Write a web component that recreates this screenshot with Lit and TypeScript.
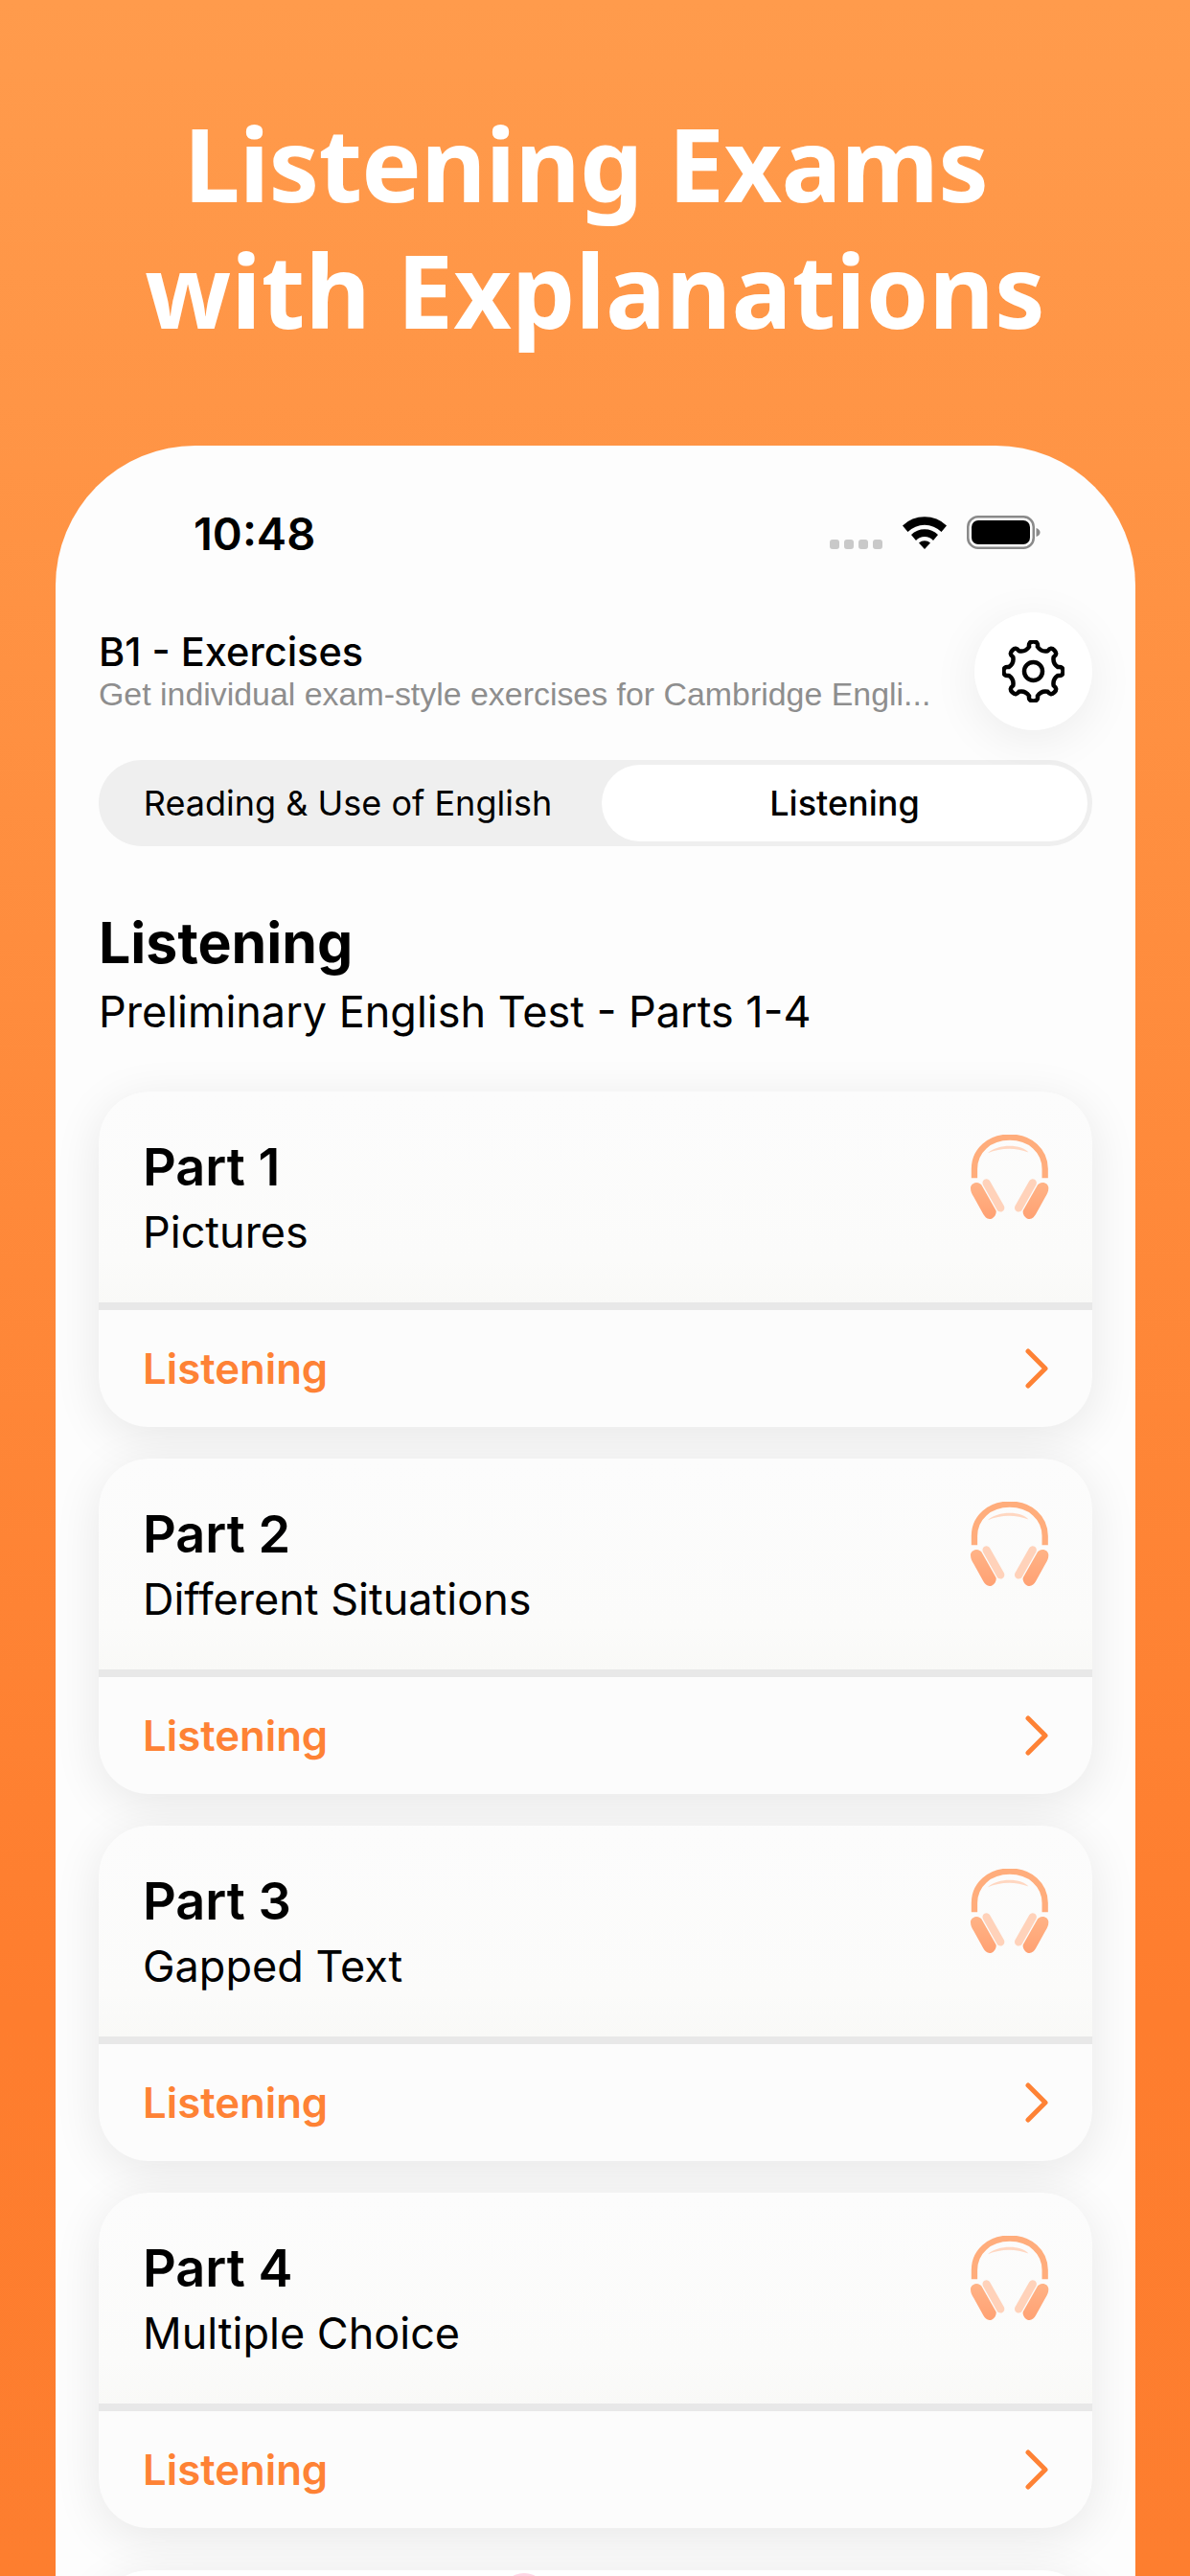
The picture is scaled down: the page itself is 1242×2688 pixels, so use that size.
import { LitElement, html, css, svg } from "lit";
import { customElement } from "lit/decorators.js";

const parts = [
  ["Part 1", "Pictures"],
  ["Part 2", "Different Situations"],
  ["Part 3", "Gapped Text"],
  ["Part 4", "Multiple Choice"],
];

function gearPath(): string {
  const cx = 32.5;
  const cy = 32.5;
  const pt = (r: number, a: number) =>
    `${(cx + r * Math.cos(a)).toFixed(2)} ${(cy + r * Math.sin(a)).toFixed(2)}`;
  let d = "";
  for (let i = 0; i < 8; i++) {
    const a = -Math.PI / 2 + (i * Math.PI) / 4;
    const next = a + Math.PI / 4;
    const w = 0.17;
    d += i === 0 ? `M${pt(26, a - w)}` : `L${pt(26, a - w)}`;
    d += `Q${pt(31.5, a - w)} ${pt(31, a)}`;
    d += `Q${pt(31.5, a + w)} ${pt(26, a + w)}`;
    d += `Q${pt(21.5, a + Math.PI / 8)} ${pt(26, next - w)}`;
  }
  return d + "Z";
}

const cup =
  "M96 240C96 226 112 218 126 226C135 231 140 240 145 248L174 300C180 312 176 330 162 336C150 340 142 332 136 322L106 268C100 258 96 250 96 240Z";

const phones = svg`
  <defs>
    <linearGradient id="cup" x1="0" y1="0" x2="0" y2="1">
      <stop offset="0" stop-color="#ffb386" />
      <stop offset="1" stop-color="#ffa173" />
    </linearGradient>
  </defs>
  <path d="M108 208V180C108 122 155 80 219 80S330 122 330 180V208" fill="none" stroke="#ffad7c" stroke-width="19" />
  <path d="M150 130C180 100 258 100 278 128C240 112 190 112 150 130Z" fill="#ffd7c1" />
  <path d=${cup} fill="url(#cup)" />
  <path d=${cup} fill="url(#cup)" transform="matrix(-1 0 0 1 437 0)" />
  <path d="M146 224L190 302" fill="none" stroke="#fbfbfa" stroke-width="33" stroke-linecap="round" />
  <path d="M291 224L247 302" fill="none" stroke="#fbfbfa" stroke-width="33" stroke-linecap="round" />
  <path d="M146 224L190 302" fill="none" stroke="#ffd2ba" stroke-width="25" stroke-linecap="round" />
  <path d="M291 224L247 302" fill="none" stroke="#ffd2ba" stroke-width="25" stroke-linecap="round" />
`;

@customElement("app-root")
export class AppRoot extends LitElement {
  static styles = css`
    :host {
      display: block;
      width: 1242px;
      height: 2688px;
      overflow: hidden;
      background: linear-gradient(180deg, #ff9b4c 0%, #fe7d2e 78%, #fd7e2f 100%);
      font-family: Inter, "Liberation Sans", sans-serif;
      color: #000;
    }
    .title {
      margin: 0;
      padding-top: 105px;
      height: 465px;
      box-sizing: border-box;
      text-align: center;
      color: #fff;
      font: 700 105px/132px "Noto Sans", "Open Sans", sans-serif;
    }
    .line-a { display: inline-block; padding-right: 19px; letter-spacing: -0.7px; }
    .line-b { display: inline-block; letter-spacing: 0.15px; }
    .phone {
      margin: 0 57px 0 58px;
      height: 2223px;
      box-sizing: border-box;
      padding: 0 45px;
      background: #fdfdfd;
      border-radius: 146px 146px 0 0;
      overflow: hidden;
    }
    .status {
      height: 173px;
      margin: 0 -45px;
      padding: 0 99px 0 144px;
      display: flex;
      align-items: flex-start;
      justify-content: space-between;
    }
    .time {
      font-size: 47px;
      font-weight: 600;
      line-height: 57px;
      margin-top: 63px;
    }
    .sys {
      display: flex;
      margin-top: 73px;
      align-items: flex-start;
      gap: 21px;
    }
    .dots { display: flex; gap: 5px; margin-top: 25px; }
    .dots i { width: 10px; height: 10px; border-radius: 3px; background: #c9c9c9; }
    .head { display: flex; align-items: center; gap: 24px; height: 124px; }
    .head-text { flex: 1; min-width: 0; }
    .h1 { font-size: 41.5px; font-weight: 500; line-height: 48px; }
    .h2 {
      font: 400 33.9px/40px "Liberation Sans", Arial, sans-serif;
      color: #8e8e8e;
      white-space: nowrap;
    }
    .gear {
      width: 123px;
      height: 123px;
      flex: none;
      border-radius: 50%;
      background: #fff;
      display: flex;
      align-items: center;
      justify-content: center;
      box-shadow: 0 10px 50px rgba(0, 0, 0, 0.07);
    }
    .seg {
      margin-top: 31px;
      height: 90px;
      box-sizing: border-box;
      padding: 5px;
      border-radius: 45px;
      background: #efefef;
      display: flex;
      font-size: 36px;
      line-height: 80px;
      text-align: center;
    }
    .seg div { flex: 1; }
    .seg .on { background: #fff; border-radius: 40px; font-weight: 500; flex: 0 0 507px; }
    .seg .off { padding-right: 10px; }
    .sec { font-size: 59px; font-weight: 700; line-height: 72px; margin-top: 65px; }
    .sub { font-size: 45px; line-height: 54px; margin-top: 9px; }
    .list { display: flex; flex-direction: column; gap: 33px; margin-top: 56px; }
    .wrap { border-radius: 52px; box-shadow: 0 10px 50px rgba(0, 0, 0, 0.09); flex: none; }
    .card {
      height: 350px;
      display: flex;
      flex-direction: column;
      border-radius: 52px;
      overflow: hidden;
      background: #e8e8e8;
    }
    .top {
      height: 220px;
      box-sizing: border-box;
      background: linear-gradient(180deg, #fcfcfc 0%, #fbfbfa 80%, #f9f9f7 100%);
      padding: 45px 45px 0 46px;
      display: flex;
      align-items: flex-start;
      justify-content: space-between;
    }
    .name { font-size: 54px; font-weight: 600; line-height: 65px; margin-top: 1px; }
    .desc { font-size: 45px; line-height: 54px; margin-top: 9px; }
    .foot {
      height: 122px;
      margin-top: 8px;
      box-sizing: border-box;
      background: #fcfcfc;
      padding: 0 46px;
      display: flex;
      align-items: center;
      justify-content: space-between;
      color: #fe8235;
      font-size: 43.7px;
      font-weight: 600;
    }
    .peek {
      height: 120px;
      margin-top: 11px;
      background: #fff;
      border-radius: 52px 52px 0 0;
      flex: none;
      box-shadow: 0 10px 50px rgba(0, 0, 0, 0.09);
      position: relative;
      overflow: hidden;
    }
    .pink {
      position: absolute;
      left: 420px;
      top: 3px;
      width: 48px;
      height: 48px;
      border-radius: 50%;
      background: #ffd5e4;
    }
  `;

  render() {
    return html`
      <h1 class="title"><span class="line-a">Listening Exams</span><br /><span class="line-b">with Explanations</span></h1>
      <div class="phone">
        <div class="status">
          <div class="time">10:48</div>
          <div class="sys">
            <div class="dots"><i></i><i></i><i></i><i></i></div>
            <svg width="46" height="35" viewBox="0 0 46 35">
              <path d="M0 10.500a33 33 0 0 1 46 0l-5.500 6.500a25 25 0 0 0-35 0z" fill="#000" />
              <path d="M9 20a20 20 0 0 1 28 0l-5 6a12 12 0 0 0-18 0z" fill="#000" />
              <path d="M17 28.500a9 9 0 0 1 12 0l-6 6.500z" fill="#000" />
            </svg>
            <svg width="77" height="35" viewBox="0 0 77 35">
              <rect x="1.250" y="1.250" width="68.500" height="32.500" rx="10.500" fill="none" stroke="#8a8a8a" stroke-width="2.500" />
              <rect x="5" y="5" width="61" height="25" rx="7" fill="#000" />
              <path d="M72.500 13q4 1.500 4 4.500t-4 4.500z" fill="#8a8a8a" />
            </svg>
          </div>
        </div>
        <div class="head">
          <div class="head-text">
            <div class="h1">B1 - Exercises</div>
            <div class="h2">Get individual exam-style exercises for Cambridge Engli...</div>
          </div>
          <div class="gear">
            <svg width="65" height="65" viewBox="0 0 65 65" fill="none" stroke="#000" stroke-width="4.500" stroke-linejoin="round">
              <circle cx="32.500" cy="32.500" r="9.500" />
              <path d=${gearPath()} />
            </svg>
          </div>
        </div>
        <div class="seg">
          <div class="off">Reading &amp; Use of English</div>
          <div class="on">Listening</div>
        </div>
        <div class="sec">Listening</div>
        <div class="sub">Preliminary English Test - Parts 1-4</div>
        <div class="list">
          ${parts.map(
            ([n, d]) => html`
              <div class="wrap">
                <div class="card">
                  <div class="top">
                    <div>
                      <div class="name">${n}</div>
                      <div class="desc">${d}</div>
                    </div>
                    <svg width="83" height="89" viewBox="93 72 250 268">${phones}</svg>
                  </div>
                  <div class="foot">
                    <span>Listening</span>
                    <svg width="24" height="42" viewBox="0 0 24 42" fill="none" stroke="#fe8235" stroke-width="5" stroke-linecap="round" stroke-linejoin="round">
                      <path d="M3 3l18 18L3 39" />
                    </svg>
                  </div>
                </div>
              </div>
            `,
          )}
          <div class="peek"><div class="pink"></div></div>
        </div>
      </div>
    `;
  }
}
